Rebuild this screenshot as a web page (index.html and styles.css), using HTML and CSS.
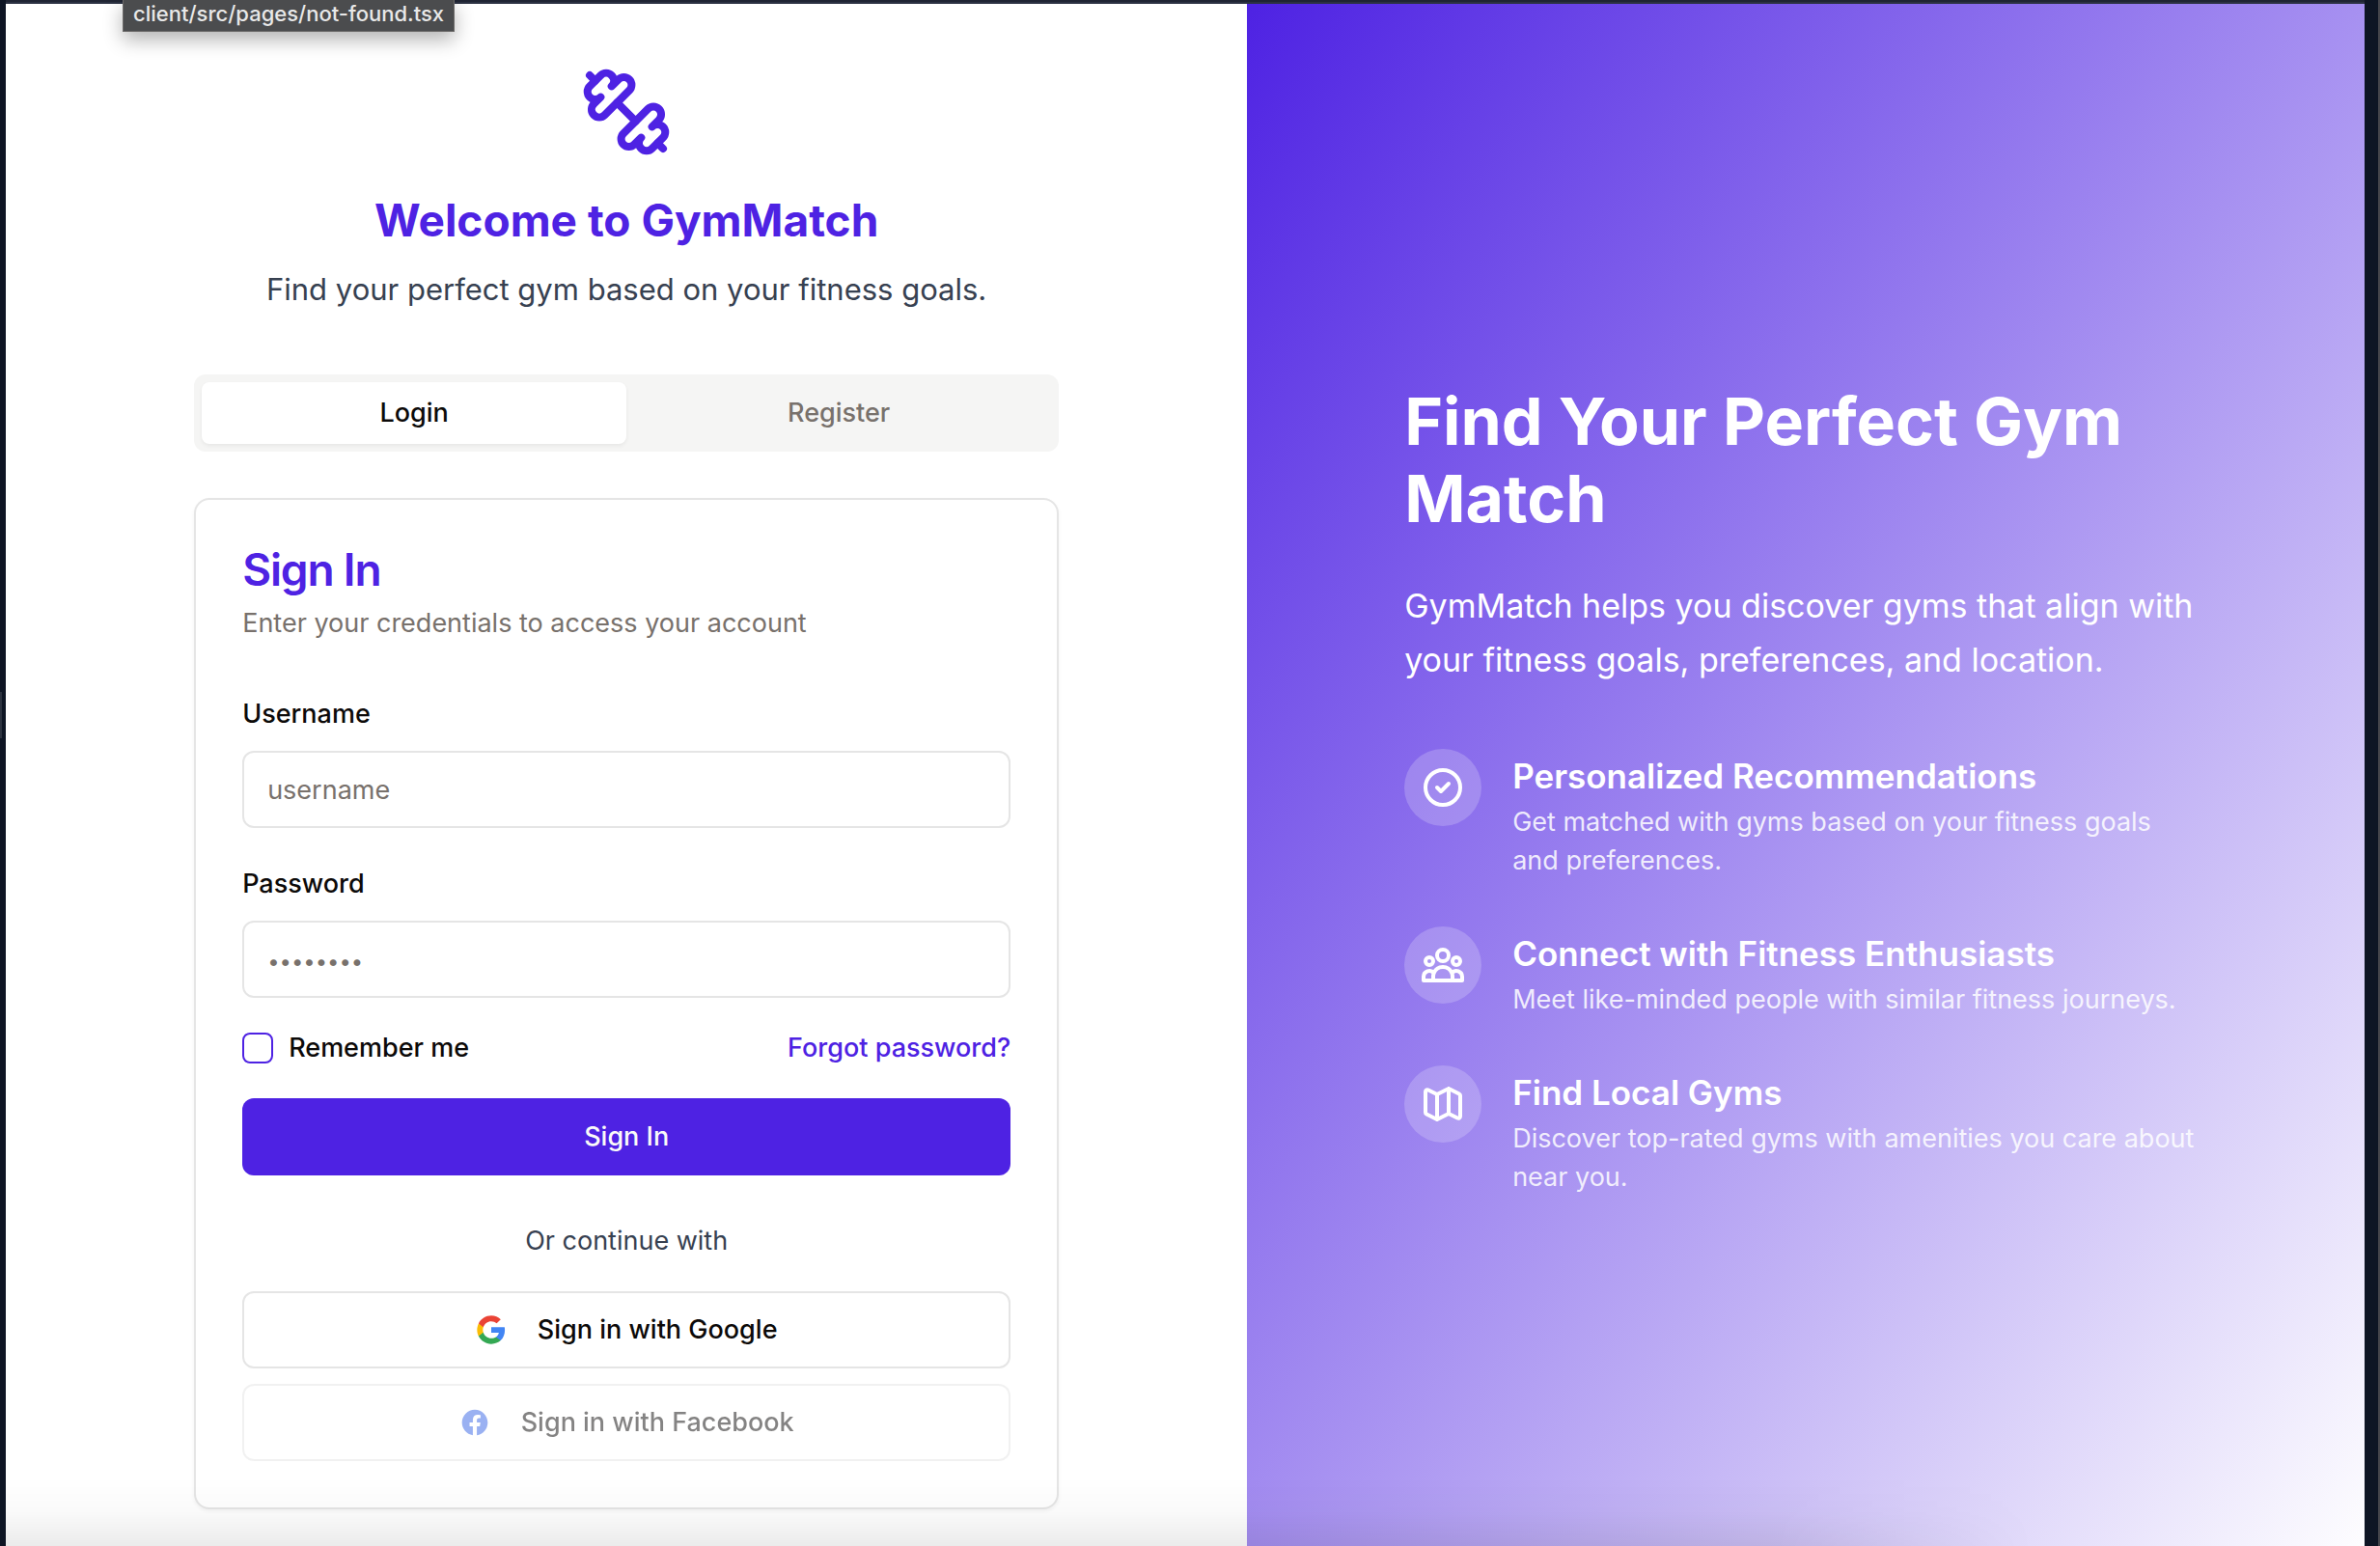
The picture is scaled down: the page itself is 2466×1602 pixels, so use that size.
FILE: index.html
```html
<!DOCTYPE html>
<html lang="en">
<head>
<meta charset="utf-8">
<meta name="viewport" content="width=device-width, initial-scale=1">
<title>GymMatch – Sign in</title>
<link rel="stylesheet" href="styles.css">
</head>
<body>
<div class="frame">
  <div class="app">
    <main class="auth">
      <div class="auth-column">
        <svg class="brand-icon" viewBox="0 0 24 24" aria-hidden="true">
          <path d="M14.4 14.4 9.6 9.6"/>
          <path d="M18.657 21.485a2 2 0 1 1-2.829-2.828l-1.767 1.768a2 2 0 1 1-2.829-2.829l6.364-6.364a2 2 0 1 1 2.829 2.829l-1.768 1.767a2 2 0 1 1 2.828 2.829z"/>
          <path d="m21.5 21.5-1.4-1.4"/>
          <path d="M3.9 3.9 2.5 2.5"/>
          <path d="M6.404 12.768a2 2 0 1 1-2.829-2.829l1.768-1.767a2 2 0 1 1-2.828-2.829l2.828-2.828a2 2 0 1 1 2.829 2.828l1.767-1.768a2 2 0 1 1 2.829 2.829z"/>
        </svg>
        <h1 class="welcome">Welcome to GymMatch</h1>
        <p class="tagline">Find your perfect gym based on your fitness goals.</p>

        <div class="tabs" role="tablist">
          <button class="tab tab-active" type="button" role="tab" aria-selected="true">Login</button>
          <button class="tab" type="button" role="tab" aria-selected="false">Register</button>
        </div>

        <section class="card">
          <header class="card-header">
            <h2 class="card-title">Sign In</h2>
            <p class="card-description">Enter your credentials to access your account</p>
          </header>
          <form class="form">
            <div class="field">
              <label for="username">Username</label>
              <input class="text-input" id="username" type="text" placeholder="username">
            </div>
            <div class="field">
              <label for="password">Password</label>
              <input class="text-input" id="password" type="password" placeholder="••••••••">
            </div>
            <div class="form-row">
              <div class="remember">
                <input class="checkbox" id="remember" type="checkbox">
                <label for="remember">Remember me</label>
              </div>
              <a class="forgot" href="#">Forgot password?</a>
            </div>
            <button class="button button-primary" type="submit">Sign In</button>
          </form>
          <p class="divider-text">Or continue with</p>
          <div class="providers">
            <button class="button button-outline" type="button">
              <svg class="provider-icon" viewBox="0 0 24 24" aria-hidden="true">
                <path fill="#4285F4" d="M22.56 12.25c0-.78-.07-1.53-.2-2.25H12v4.26h5.92c-.26 1.37-1.04 2.53-2.21 3.31v2.77h3.57c2.08-1.92 3.28-4.74 3.28-8.09z"/>
                <path fill="#34A853" d="M12 23c2.97 0 5.46-.98 7.28-2.66l-3.57-2.77c-.98.66-2.23 1.06-3.71 1.06-2.86 0-5.29-1.93-6.16-4.53H2.18v2.84C3.99 20.53 7.7 23 12 23z"/>
                <path fill="#FBBC05" d="M5.84 14.09c-.22-.66-.35-1.36-.35-2.09s.13-1.43.35-2.09V7.07H2.18C1.43 8.55 1 10.22 1 12s.43 3.45 1.18 4.93l2.85-2.22.81-.62z"/>
                <path fill="#EA4335" d="M12 5.38c1.62 0 3.06.56 4.21 1.64l3.15-3.15C17.45 2.09 14.97 1 12 1 7.7 1 3.99 3.47 2.18 7.07l3.66 2.84c.87-2.6 3.3-4.53 6.16-4.53z"/>
              </svg>
              Sign in with Google
            </button>
            <button class="button button-outline" type="button" disabled>
              <svg class="provider-icon" viewBox="0 0 24 24" aria-hidden="true">
                <path fill="#3766e7" d="M12 2.04C6.5 2.04 2 6.53 2 12.06C2 17.06 5.66 21.21 10.44 21.96V14.96H7.9V12.06H10.44V9.85C10.44 7.34 11.93 5.96 14.22 5.96C15.31 5.96 16.45 6.15 16.45 6.15V8.62H15.19C13.95 8.62 13.56 9.39 13.56 10.18V12.06H16.34L15.89 14.96H13.56V21.96A10 10 0 0 0 22 12.06C22 6.53 17.5 2.04 12 2.04Z"/>
              </svg>
              Sign in with Facebook
            </button>
          </div>
        </section>
      </div>
    </main>

    <aside class="hero">
      <div class="hero-content">
        <h2 class="hero-title">Find Your Perfect Gym Match</h2>
        <p class="hero-lead">GymMatch helps you discover gyms that align with your fitness goals, preferences, and location.</p>
        <ul class="features">
          <li class="feature">
            <span class="feature-badge">
              <svg class="feature-icon" viewBox="0 0 24 24" aria-hidden="true"><path d="M9 12l2 2 4-4m6 2a9 9 0 11-18 0 9 9 0 0118 0z"/></svg>
            </span>
            <div>
              <h3 class="feature-title">Personalized Recommendations</h3>
              <p class="feature-text">Get matched with gyms based on your fitness goals and preferences.</p>
            </div>
          </li>
          <li class="feature">
            <span class="feature-badge">
              <svg class="feature-icon" viewBox="0 0 24 24" aria-hidden="true"><path d="M17 20h5v-2a3 3 0 00-5.356-1.857M17 20H7m10 0v-2c0-.656-.126-1.283-.356-1.857M7 20H2v-2a3 3 0 015.356-1.857M7 20v-2c0-.656.126-1.283.356-1.857m0 0a5.002 5.002 0 019.288 0M15 7a3 3 0 11-6 0 3 3 0 016 0zm6 3a2 2 0 11-4 0 2 2 0 014 0zM7 10a2 2 0 11-4 0 2 2 0 014 0z"/></svg>
            </span>
            <div>
              <h3 class="feature-title">Connect with Fitness Enthusiasts</h3>
              <p class="feature-text">Meet like-minded people with similar fitness journeys.</p>
            </div>
          </li>
          <li class="feature">
            <span class="feature-badge">
              <svg class="feature-icon" viewBox="0 0 24 24" aria-hidden="true"><path d="M9 20l-5.447-2.724A1 1 0 013 16.382V5.618a1 1 0 011.447-.894L9 7m0 13l6-3m-6 3V7m6 10l4.553 2.276A1 1 0 0021 18.382V7.618a1 1 0 00-.553-.894L15 4m0 13V4m0 0L9 7"/></svg>
            </span>
            <div>
              <h3 class="feature-title">Find Local Gyms</h3>
              <p class="feature-text">Discover top-rated gyms with amenities you care about near you.</p>
            </div>
          </li>
        </ul>
      </div>
    </aside>
  </div>
  <div class="resize-handle"></div>
  <div class="bottom-shade"></div>
  <div class="tooltip" role="tooltip">client/src/pages/not-found.tsx</div>
</div>
</body>
</html>
```
FILE: styles.css
```css
:root {
  --primary: #4e22e3;
  --border: #e5e5e5;
  --muted: #78716c;
  --slate: #374151;
  --shell: #0e1524;
}

*, *::before, *::after { box-sizing: border-box; }

body, h1, h2, h3, p, ul { margin: 0; padding: 0; }

body {
  font-family: Inter, "Liberation Sans", sans-serif;
  font-size: 27px;
  line-height: 40px;
  color: #0c0a09;
  background: var(--shell);
}

button, input { font: inherit; color: inherit; }

/* Preview pane around the app */
.frame {
  position: relative;
  height: 100vh;
  overflow: hidden;
  padding: 4px 14px 0 6px;
  border-right: 2px solid #45454b;
}

.app {
  display: grid;
  grid-template-columns: 10fr 9fr;
  background: #fff;
  box-shadow: 0 -2px 0 #2b3142, 0 -4px 0 #1f2433;
}

/* Sign-in side */
.auth {
  display: flex;
  justify-content: center;
  padding: 64px;
}

.auth-column {
  display: flex;
  flex-direction: column;
  align-items: center;
  width: 100%;
  max-width: 896px;
}

.brand-icon {
  width: 96px;
  height: 96px;
  margin-bottom: 32px;
  fill: none;
  stroke: var(--primary);
  stroke-width: 2;
  stroke-linecap: round;
  stroke-linejoin: round;
}

.welcome {
  margin-bottom: 16px;
  font-size: 46px;
  line-height: 64px;
  font-weight: 700;
  color: var(--primary);
}

.tagline {
  margin-bottom: 64px;
  font-size: 31px;
  line-height: 48px;
  color: var(--slate);
}

.tabs {
  display: grid;
  grid-template-columns: 1fr 1fr;
  width: 100%;
  height: 80px;
  margin-bottom: 48px;
  padding: 8px;
  border-radius: 12px;
  background: #f5f5f4;
}

.tab {
  border: 0;
  border-radius: 8px;
  background: none;
  font-weight: 500;
  color: var(--muted);
}

.tab-active {
  background: #fff;
  color: #0c0a09;
  box-shadow: 0 2px 4px rgba(0, 0, 0, 0.06);
}

.card {
  width: 100%;
  padding: 48px;
  border: 2px solid var(--border);
  border-radius: 16px;
  background: #fff;
  box-shadow: 0 2px 4px rgba(0, 0, 0, 0.05);
}

.card-header {
  display: grid;
  gap: 12px;
  margin-bottom: 48px;
}

.card-title {
  font-size: 46px;
  line-height: 48px;
  font-weight: 600;
  letter-spacing: -0.025em;
  color: var(--primary);
}

.card-description { color: var(--muted); }

.form {
  display: grid;
  gap: 32px;
}

.field {
  display: grid;
  gap: 12px;
}

.field label {
  line-height: 52px;
  font-weight: 500;
}

.text-input {
  width: 100%;
  height: 80px;
  padding: 0 24px;
  border: 2px solid var(--border);
  border-radius: 12px;
  background: #fff;
}

.text-input::placeholder {
  color: var(--muted);
  opacity: 1;
}

.text-input[type="password"]::placeholder { font-size: 22px; }

.form-row {
  display: flex;
  align-items: center;
  justify-content: space-between;
}

.remember {
  display: flex;
  align-items: center;
  gap: 16px;
  font-weight: 500;
}

.checkbox {
  appearance: none;
  width: 32px;
  height: 32px;
  margin: 0;
  border: 2px solid var(--primary);
  border-radius: 8px;
}

.forgot {
  font-weight: 500;
  color: var(--primary);
  text-decoration: none;
}

.button {
  display: flex;
  align-items: center;
  justify-content: center;
  gap: 32px;
  width: 100%;
  height: 80px;
  border: 0;
  border-radius: 12px;
  font-weight: 500;
}

.button-primary {
  background: var(--primary);
  color: #fafaf9;
}

.button-outline {
  border: 2px solid var(--border);
  background: #fff;
}

.button:disabled { opacity: 0.5; }

.provider-icon {
  width: 32px;
  height: 32px;
}

.divider-text {
  margin: 48px 0 32px;
  text-align: center;
  color: var(--slate);
}

.providers {
  display: grid;
  gap: 16px;
}

/* Marketing side */
.hero {
  display: flex;
  align-items: center;
  justify-content: center;
  padding: 64px;
  background: linear-gradient(to bottom right, var(--primary), #fff);
  color: #fff;
}

.hero-content {
  width: 100%;
  max-width: 832px;
}

.hero-title {
  padding-top: 4px;
  margin-bottom: 44px;
  font-size: 68px;
  line-height: 80px;
  font-weight: 700;
}

.hero-lead {
  margin-bottom: 64px;
  font-size: 34px;
  line-height: 56px;
}

.features {
  display: grid;
  gap: 48px;
  padding-right: 8px;
  list-style: none;
}

.feature {
  display: flex;
  gap: 32px;
}

.feature-badge {
  display: flex;
  flex: none;
  align-items: center;
  justify-content: center;
  width: 80px;
  height: 80px;
  border-radius: 50%;
  background: rgba(255, 255, 255, 0.2);
}

.feature-icon {
  width: 48px;
  height: 48px;
  fill: none;
  stroke: #fff;
  stroke-width: 2;
  stroke-linecap: round;
  stroke-linejoin: round;
}

.feature-title {
  font-size: 35px;
  line-height: 56px;
  font-weight: 600;
}

.feature-text { color: rgba(255, 255, 255, 0.85); }

/* Pieces that float over the pane */
.resize-handle {
  position: absolute;
  top: 717px;
  left: 0;
  width: 2px;
  height: 48px;
  background: #2d3340;
}

.bottom-shade {
  position: absolute;
  left: 6px;
  right: 14px;
  bottom: 0;
  height: 72px;
  background: linear-gradient(to bottom, rgba(0, 0, 0, 0), rgba(0, 0, 0, 0.02) 50%, rgba(0, 0, 0, 0.08));
  mask-image: linear-gradient(to right, #000 75%, transparent 86%);
}

.tooltip {
  position: absolute;
  top: 0;
  left: 127px;
  padding: 0 10px 4px;
  border: 1px solid #6c6a69;
  border-top: 0;
  background: #4b4c4e;
  box-shadow: 0 8px 20px rgba(0, 0, 0, 0.3);
  font-size: 22px;
  line-height: 28px;
  font-weight: 500;
  color: #e8e8e8;
}
```
